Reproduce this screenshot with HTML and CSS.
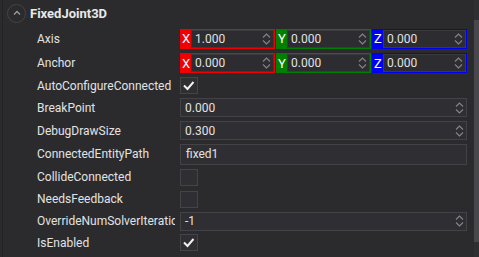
FILE: index.html
```html
<!DOCTYPE html>
<html lang="en">
<head>
  <meta charset="UTF-8">
  <title>FixedJoint3D</title>
  <link rel="stylesheet" href="styles.css">
</head>
<body>
  <div class="container">
    <div class="panel">
      <div class="header">
        <span class="collapse">
          <svg width="10" height="10" viewBox="0 0 10 10"><path d="M2 6.5 L5 3.5 L8 6.5" fill="none" stroke="#9a9a9a" stroke-width="1.4"/></svg>
        </span>
        <span class="title">FixedJoint3D</span>
      </div>

      <div class="row h25">
        <div class="label">Axis</div>
        <div class="vector">
          <div class="axis x"><span class="letter">X</span><div class="vinput"><span>1.000</span><i class="spin"></i></div></div>
          <div class="axis y"><span class="letter">Y</span><div class="vinput"><span>0.000</span><i class="spin"></i></div></div>
          <div class="axis z"><span class="letter">Z</span><div class="vinput"><span>0.000</span><i class="spin"></i></div></div>
        </div>
      </div>

      <div class="row h24">
        <div class="label">Anchor</div>
        <div class="vector">
          <div class="axis x"><span class="letter">X</span><div class="vinput"><span>0.000</span><i class="spin"></i></div></div>
          <div class="axis y"><span class="letter">Y</span><div class="vinput"><span>0.000</span><i class="spin"></i></div></div>
          <div class="axis z"><span class="letter">Z</span><div class="vinput"><span>0.000</span><i class="spin"></i></div></div>
        </div>
      </div>

      <div class="row h21">
        <div class="label">AutoConfigureConnected</div>
        <div class="check checked"></div>
      </div>

      <div class="row h23">
        <div class="label">BreakPoint</div>
        <div class="field"><span>0.000</span><i class="spin"></i></div>
      </div>

      <div class="row h23">
        <div class="label">DebugDrawSize</div>
        <div class="field"><span>0.300</span><i class="spin"></i></div>
      </div>

      <div class="row h24">
        <div class="label">ConnectedEntityPath</div>
        <div class="field text"><span>fixed1</span></div>
      </div>

      <div class="row">
        <div class="label">CollideConnected</div>
        <div class="check"></div>
      </div>

      <div class="row">
        <div class="label">NeedsFeedback</div>
        <div class="check"></div>
      </div>

      <div class="row">
        <div class="label">OverrideNumSolverIterations</div>
        <div class="field"><span>-1</span><i class="spin"></i></div>
      </div>

      <div class="row h21">
        <div class="label">IsEnabled</div>
        <div class="check checked"></div>
      </div>
    </div>
    <div class="scrollbar"><div class="thumb"></div></div>
  </div>
</body>
</html>
```

FILE: styles.css
```css
* {
    box-sizing: border-box;
}

body {
    margin: 0;
    padding: 0;
    background-color: #2b2b2e;
    font-family: Roboto, "Liberation Sans", sans-serif;
    font-size: 12px;
    color: #e2e2e2;
    overflow: hidden;
}

.container {
    display: flex;
    height: 257px;
}

.panel {
    flex: 1;
    border-left: 1px solid #232325;
    margin-left: 2px;
}

.header {
    height: 26px;
    display: flex;
    align-items: center;
    padding-left: 4px;
}

.collapse {
    width: 19px;
    height: 19px;
    border: 1px solid #444447;
    border-radius: 50%;
    display: flex;
    align-items: center;
    justify-content: center;
    margin-right: 4px;
}

.title {
    font-weight: bold;
    font-size: 13px;
    color: #e8e8e8;
}

.row {
    display: flex;
    align-items: center;
    height: 22px;
    padding-left: 34px;
}

.h21 { height: 21px; }
.h23 { height: 23px; }
.h24 { height: 24px; }
.h25 { height: 25px; }

.label {
    width: 138px;
    margin-right: 5px;
    white-space: nowrap;
    overflow: hidden;
}

.vector {
    display: flex;
    gap: 1px;
    width: 287px;
}

.axis {
    flex: 1;
    display: flex;
    height: 20px;
    border: 1px solid;
}

.axis.x { border-color: #f00000; background-color: #f00000; }
.axis.y { border-color: #008000; background-color: #008000; }
.axis.z { border-color: #0000f0; background-color: #0000f0; }

.letter {
    width: 10px;
    color: #ffffff;
    font-size: 13px;
    display: flex;
    align-items: center;
    justify-content: center;
}

.vinput {
    flex: 1;
    display: flex;
    align-items: center;
    justify-content: space-between;
    background-color: #2d2d31;
    border: 1px solid #3b3b3f;
    padding-left: 3px;
    padding-right: 2px;
}

.field {
    width: 287px;
    height: 19px;
    display: flex;
    align-items: center;
    justify-content: space-between;
    background-color: #2f2f33;
    border: 1px solid #434347;
    padding-left: 4px;
    padding-right: 2px;
}

.field.text {
    height: 21px;
    padding-left: 5px;
}

.spin {
    width: 9px;
    height: 16px;
    background-image: url("data:image/svg+xml,%3Csvg xmlns='http://www.w3.org/2000/svg' width='9' height='16'%3E%3Cpath d='M1 6.5 L4.5 3 L8 6.5 M1 9.5 L4.5 13 L8 9.5' fill='none' stroke='%23868686' stroke-width='1.1'/%3E%3C/svg%3E");
}

.check {
    width: 18px;
    height: 17px;
    background-color: #2f2f33;
    border: 1px solid #444448;
}

.check.checked {
    background-image: url("data:image/svg+xml,%3Csvg xmlns='http://www.w3.org/2000/svg' width='16' height='15'%3E%3Cpath d='M3 7.5 L6.5 11 L12.5 4' fill='none' stroke='%23f0f0f0' stroke-width='2'/%3E%3C/svg%3E");
}

.scrollbar {
    width: 5px;
    background-color: #2f2f32;
    margin-left: 4px;
}

.thumb {
    margin-top: 20px;
    height: 222px;
    background-color: #48484c;
}
```
